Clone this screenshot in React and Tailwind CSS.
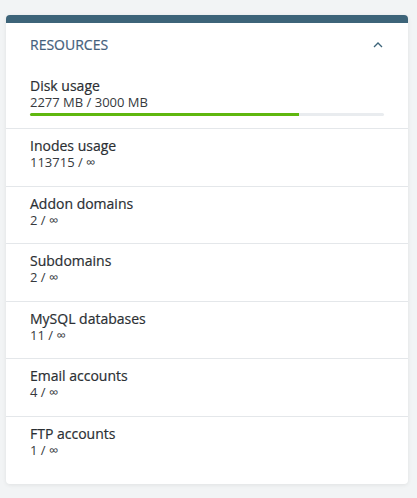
import React from "react";

const rows = [
    { label: "Inodes usage", value: "113715 / ∞" },
    { label: "Addon domains", value: "2 / ∞" },
    { label: "Subdomains", value: "2 / ∞" },
    { label: "MySQL databases", value: "11 / ∞" },
    { label: "Email accounts", value: "4 / ∞" },
    { label: "FTP accounts", value: "1 / ∞" },
];

export default function App() {
    const used = 2277;
    const total = 3000;
    const pct = (used / total) * 100;

    return (
        <div
            className="min-h-[498px] w-full bg-[#f2f4f5] pt-[15px]"
            style={{ fontFamily: '"Open Sans", "Noto Sans", sans-serif' }}
        >
            <div className="ml-[6px] w-[402px] rounded-[4px] border-t-[8px] border-[#3d6479] bg-white pb-[11px] shadow-[0_1px_4px_rgba(0,0,0,0.08)]">
                <div className="flex items-center justify-between px-6 pt-3 pb-3">
                    <h2 className="text-[14px] leading-[20px] uppercase text-[#44607c] [-webkit-text-stroke:0.2px_#44607c]">Resources</h2>
                    <svg width="10" height="6" viewBox="0 0 10 6" fill="none" className="mr-[1px]">
                        <path d="M1 5L5 1L9 5" stroke="#3d6479" strokeWidth="1.3" />
                    </svg>
                </div>

                <div className="px-6 pt-[9px] pb-3 border-b border-[#e4e7ea]">
                    <p className="text-[14px] leading-[19px] text-[#2b2f33] [-webkit-text-stroke:0.2px_#2b2f33]">Disk usage</p>
                    <p className="text-[13px] leading-[15px] text-[#36393d]">
                        {used} MB / {total} MB
                    </p>
                    <div className="mt-[3px] h-[3px] w-full rounded-full bg-[#e9ecef]">
                        <div className="h-full rounded-l-full bg-[#5fb70f]" style={{ width: `${pct}%` }}></div>
                    </div>
                </div>

                {rows.map((row, i) => (
                    <div
                        key={row.label}
                        className={`px-6 pt-[7px] pb-[15.5px] ${i < rows.length - 1 ? "border-b border-[#e4e7ea]" : ""}`}
                    >
                        <p className="text-[14px] leading-[19px] text-[#2b2f33] [-webkit-text-stroke:0.2px_#2b2f33]">{row.label}</p>
                        <p className="text-[13px] leading-[15px] text-[#36393d]">{row.value}</p>
                    </div>
                ))}
            </div>
        </div>
    );
}
